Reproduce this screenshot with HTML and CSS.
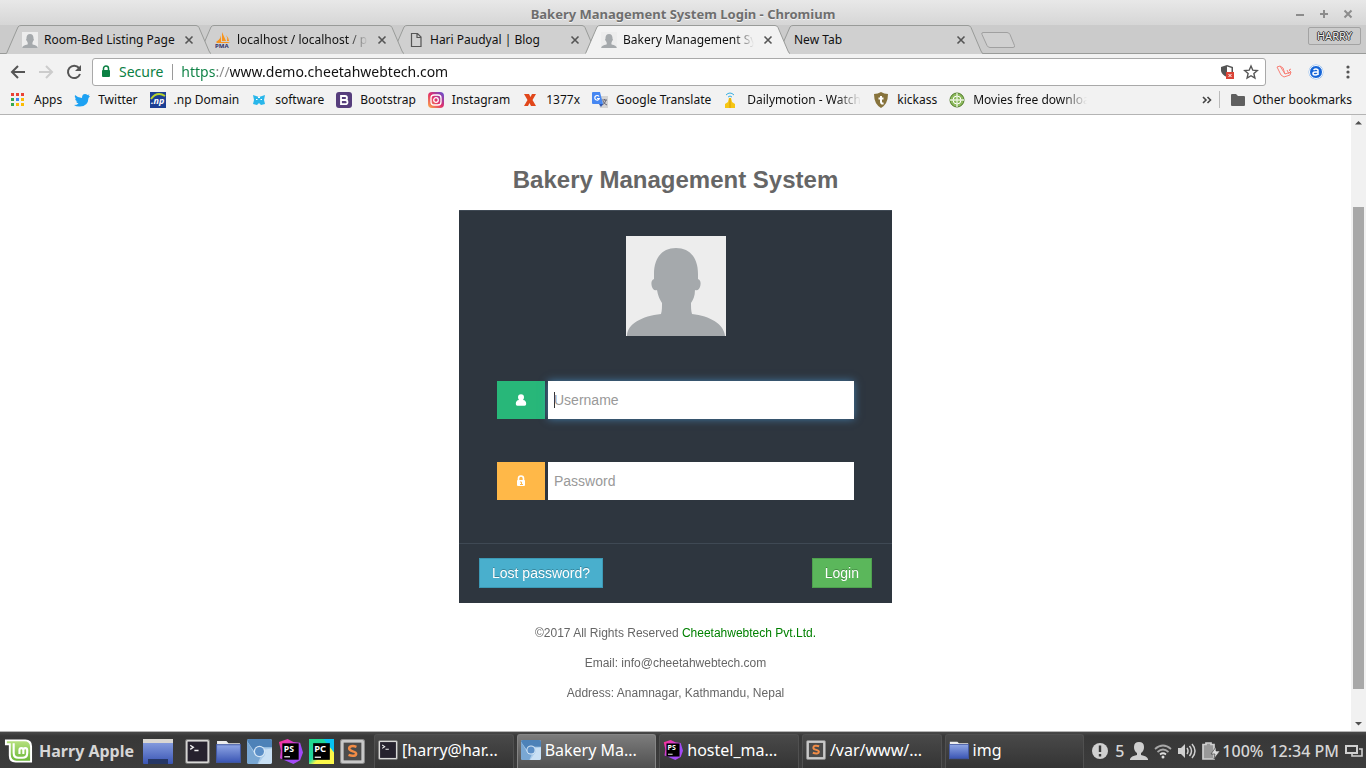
FILE: index.html
```html
<!DOCTYPE html>
<html lang="en">
<head>
    <meta charset="UTF-8">
    <meta name="viewport" content="width=device-width, initial-scale=1.0">
    <title>Bakery Management System Login</title>
    <link rel="stylesheet" href="styles.css">
</head>
<body>
    <!-- Shared icons -->
    <svg class="defs" aria-hidden="true">
        <defs>
            <linearGradient id="blueGrad" x1="0" y1="0" x2="0" y2="1">
                <stop offset="0" stop-color="#8fa6e4"/><stop offset="1" stop-color="#3a55b4"/>
            </linearGradient>
            <linearGradient id="instaGrad" x1="0" y1="1" x2="1" y2="0">
                <stop offset="0" stop-color="#fdb04b"/><stop offset=".5" stop-color="#e1306c"/><stop offset="1" stop-color="#5b51d8"/>
            </linearGradient>
            <linearGradient id="mintGrad" x1="0" y1="0" x2="0" y2="1">
                <stop offset="0" stop-color="#b5e07d"/><stop offset="1" stop-color="#6cb83a"/>
            </linearGradient>
            <linearGradient id="psGrad" x1="0" y1="0" x2="1" y2="1">
                <stop offset="0" stop-color="#fc3191"/><stop offset=".35" stop-color="#d93cc8"/><stop offset=".6" stop-color="#9a4dfa"/><stop offset="1" stop-color="#b345f1"/>
            </linearGradient>
            <linearGradient id="pcGrad" x1="0" y1="0" x2="1" y2="1">
                <stop offset="0" stop-color="#21d789"/><stop offset=".45" stop-color="#21d7a0"/><stop offset=".6" stop-color="#fcf84a"/><stop offset="1" stop-color="#fcf84a"/>
            </linearGradient>
        </defs>
        <symbol id="avatar" viewBox="0 0 100 100">
            <rect width="100" height="100" fill="#ededed"/>
            <path fill="#a5a9ac" d="M50 12C36 12 28 22 28 38v5c-3 1-3 5-2 8 1 2 2 4 5 3 1 6 3 10 5 13 0 4 0 8-1 11C16 80 1 88 1 100h98C98 88 84 80 66 78c-1-3-1-7-1-11 2-3 4-7 4-13 3 1 4-1 5-3 1-3 1-7-2-8v-5C72 22 64 12 50 12z"/>
        </symbol>
        <symbol id="close" viewBox="0 0 10 10"><path d="M1.5 1.5l7 7M8.500 1.500l-7 7" stroke="#555" stroke-width="1.600" fill="none"/></symbol>
        <symbol id="tabshape" viewBox="0 0 205 29" preserveAspectRatio="none">
            <path d="M0 29C3 28 10 3 13 1Q13.500.5 15 .5H190Q192 .5 193 2.500L203 26Q204 28.500 205 29z" stroke="none"/>
            <path d="M.5 28.500L12 2Q13 .5 15 .5H190Q192 .5 193 2.500L203 26Q204 28.500 205 28.500" fill="none" stroke="#999b99"/>
        </symbol>
        <symbol id="terminal" viewBox="0 0 24 24">
            <rect x=".5" y=".5" width="23" height="23" rx="2" fill="#d8d8d6" stroke="#777"/>
            <rect x="2.500" y="2.500" width="19" height="19" fill="#26222e"/>
            <path d="M5 6l3 2-3 2M9 11h4" fill="none" stroke="#eee" stroke-width="1.300"/>
        </symbol>
        <symbol id="folder" viewBox="0 0 24 24">
            <path d="M1 4V2h9l2 2h11v8H1z" fill="#ececec"/>
            <rect x=".5" y="5.500" width="23" height="17" fill="url(#blueGrad)" stroke="#4158a3"/>
        </symbol>
        <symbol id="chromium" viewBox="0 0 24 24">
            <rect width="24" height="24" rx="2" fill="#a9cbea"/>
            <path d="M0 2q0-2 2-2h20q2 0 2 2v6H12a5 5 0 0 0-5 4z" fill="#4d82b8"/>
            <path d="M0 2l7 12q3 4 6 3l-3 7H2q-2 0-2-2z" fill="#79a7d3"/>
            <path d="M17 10q2 5-2 8l-4 6h11q2 0 2-2V9z" fill="#c9e0f4"/>
            <circle cx="12" cy="12" r="5.500" fill="#d5e6f5"/><circle cx="12" cy="12" r="4.300" fill="#5b8fc7"/>
        </symbol>
        <symbol id="phpstorm" viewBox="0 0 26 26">
            <path d="M1 3l9-3 6 3 7 1 3 10-3 8-7 4-9-4-5-2 1-8z" fill="url(#psGrad)"/>
            <rect x="4.500" y="4.500" width="17" height="17" fill="#000"/>
            <text x="6" y="13" class="glyph">PS</text><path d="M6.500 18.500h6" stroke="#fff" stroke-width="1.200"/>
        </symbol>
        <symbol id="sublime" viewBox="0 0 24 24">
            <rect x=".5" y=".5" width="23" height="23" rx="2" fill="#c9c9c9" stroke="#888"/>
            <rect x="3.500" y="3.500" width="17" height="17" fill="#4b4b4b"/>
            <path d="M15.800 7.500c-4-1.500-7-.5-7 1.700 0 3.300 6.700 2 6.700 4.900 0 2.200-3.500 2.700-7.300 1.200" fill="none" stroke="#f28c46" stroke-width="2.400"/>
        </symbol>
    </svg>

    <!-- Window title -->
    <header class="titlebar">
        <span class="window-title">Bakery Management System Login - Chromium</span>
        <div class="window-controls">
            <button type="button" aria-label="Minimize"><svg viewBox="0 0 10 10"><path d="M1 6h8"/></svg></button>
            <button type="button" aria-label="Maximize"><svg viewBox="0 0 10 10"><path d="M1 5h8M5 1v8"/></svg></button>
            <button type="button" aria-label="Close window"><svg viewBox="0 0 10 10"><path d="M1.500 1.500l7 7M8.500 1.500l-7 7"/></svg></button>
        </div>
    </header>

    <!-- Tabs -->
    <nav class="tabs">
        <div class="tab">
            <svg class="tab-shape"><use href="#tabshape"/></svg>
            <svg class="icon"><use href="#avatar"/></svg>
            <span class="tab-label">Room-Bed Listing Page</span>
            <button type="button" aria-label="Close tab"><svg><use href="#close"/></svg></button>
        </div>
        <div class="tab">
            <svg class="tab-shape"><use href="#tabshape"/></svg>
            <svg class="icon" viewBox="0 0 16 16"><path d="M6 1q1 5-5 9h5zM7 0l4 9H7zM11 3q2 3 1 6h2q0-3-3-6zM1 10h14l-2 1H2z" fill="#f7941d"/><text x="0" y="16" class="pma">PMA</text></svg>
            <span class="tab-label fade">localhost / localhost / phpmyadmin</span>
            <button type="button" aria-label="Close tab"><svg><use href="#close"/></svg></button>
        </div>
        <div class="tab">
            <svg class="tab-shape"><use href="#tabshape"/></svg>
            <svg class="icon" viewBox="0 0 16 16"><path d="M3.500 1.500h6l3.500 3.500v9.500H3.500zM9 1.500V5.500h4" fill="none" stroke="#555" stroke-width="1.200"/></svg>
            <span class="tab-label">Hari Paudyal | Blog</span>
            <button type="button" aria-label="Close tab"><svg><use href="#close"/></svg></button>
        </div>
        <div class="tab active">
            <svg class="tab-shape"><use href="#tabshape"/></svg>
            <svg class="icon"><use href="#avatar"/></svg>
            <span class="tab-label fade">Bakery Management System Login</span>
            <button type="button" aria-label="Close tab"><svg><use href="#close"/></svg></button>
        </div>
        <div class="tab">
            <svg class="tab-shape"><use href="#tabshape"/></svg>
            <span class="tab-label">New Tab</span>
            <button type="button" aria-label="Close tab"><svg><use href="#close"/></svg></button>
        </div>
        <button type="button" class="new-tab" aria-label="New tab"><svg viewBox="0 0 36 18"><path d="M3 1.500h24q2 0 3 2l4.500 11q.5 2-1.500 2H10q-2 0-3-2l-5-11q-.8-2 1-2z"/></svg></button>
        <button type="button" class="profile">HARRY</button>
    </nav>

    <!-- Address bar -->
    <div class="toolbar">
        <div class="history">
            <button type="button" aria-label="Back"><svg viewBox="0 0 16 16"><path d="M15 8H2M8 2L2 8l6 6" fill="none" stroke="#555" stroke-width="2"/></svg></button>
            <button type="button" aria-label="Forward"><svg viewBox="0 0 16 16"><path d="M1 8h13M8 2l6 6-6 6" fill="none" stroke="#ccc" stroke-width="2"/></svg></button>
            <button type="button" aria-label="Reload"><svg viewBox="0 0 16 16"><path d="M13 4A6.200 6.200 0 1 0 14 10" fill="none" stroke="#555" stroke-width="2"/><path d="M15 1v6H9z" fill="#555"/></svg></button>
        </div>
        <div class="omnibox">
            <button type="button" class="secure">
                <svg viewBox="0 0 10 13"><path d="M2.500 6V3.500a2.500 2.500 0 0 1 5 0V6" fill="none" stroke="#0b8043" stroke-width="1.500"/><rect x="1" y="5" width="8" height="7" rx="1" fill="#0b8043"/></svg>
                Secure
            </button>
            <input type="text" class="url" aria-label="Address" value="https://www.demo.cheetahwebtech.com">
            <button type="button" aria-label="Site blocked"><svg viewBox="0 0 16 16"><path d="M8 1l6 2v5H12.500V4L8 2.500V13q-5-2-6-6V3z" fill="#555"/><rect x="7" y="8" width="8" height="7" fill="#db4437"/><path d="M9.500 10l3 3M12.500 10l-3 3" stroke="#fff"/></svg></button>
            <button type="button" aria-label="Bookmark this page"><svg viewBox="0 0 16 16"><path d="M8 2l1.800 4.200 4.500.4-3.400 3 1 4.500L8 11.700 4.100 14.100l1-4.500-3.400-3 4.500-.4z" fill="none" stroke="#555" stroke-width="1.400"/></svg></button>
        </div>
        <div class="extensions">
            <button type="button" aria-label="Laravel"><svg viewBox="0 0 16 16"><path d="M1 3l3-1 5 8 6-2-2-2 2-1M1 3l4 8 3 2 6-2 1-3M4 2l3 2M9 10l-2-6M11 6l2 4" fill="none" stroke="#f88077"/></svg></button>
            <button type="button" aria-label="Extension"><svg viewBox="0 0 16 16"><circle cx="8" cy="8" r="7.500" fill="#8fbcf0"/><circle cx="8" cy="8" r="6.500" fill="#1565d8" stroke="#fff"/><path d="M5.500 6q2.500-2 4.500 0v5M10 8H7q-2 0-2 1.500T7 11q2 0 3-1" fill="none" stroke="#fff" stroke-width="1.500"/></svg></button>
            <button type="button" aria-label="Menu"><svg viewBox="0 0 16 16"><g fill="#555"><circle cx="8" cy="3" r="1.600"/><circle cx="8" cy="8" r="1.600"/><circle cx="8" cy="13" r="1.600"/></g></svg></button>
        </div>
    </div>

    <!-- Bookmarks -->
    <nav class="bookmarks">
        <a href="#"><svg class="icon" viewBox="0 0 16 16"><path d="M1 1h3v3H1zM6 1h3v3H6zM11 1h3v3h-3z" fill="#ea4335"/><path d="M1 6h3v3H1zM1 11h3v3H1z" fill="#34a853"/><path d="M6 6h3v3H6z" fill="#4285f4"/><path d="M11 6h3v3h-3zM6 11h3v3H6zM11 11h3v3h-3z" fill="#fbbc05"/></svg><span>Apps</span></a>
        <a href="#"><svg class="icon" viewBox="0 0 16 16"><path d="M1 3q3 3 7 3 0-4 3-4 1.500 0 2.500 1L15.500 2.500 14.500 4l1.500.3L14.500 6Q14 15 5 14.500 2 14.500 0 13q3 0 4.500-1.500Q2.500 11 2 9.500h1.500Q1 8.500 1 6.500l1.200.3Q0 5 1 3z" fill="#1da1f2"/></svg><span>Twitter</span></a>
        <a href="#"><svg class="icon" viewBox="0 0 16 16"><rect width="16" height="16" fill="#1c3f94"/><path d="M1 7Q7-1 15 4" fill="none" stroke="#b9d32c" stroke-width="2"/><text x="1" y="12" class="np">.np</text></svg><span>.np Domain</span></a>
        <a href="#"><svg class="icon" viewBox="0 0 16 16"><path d="M2 3l3 1 3 1 3-1 3-1-1 5 1 4-4 1-2-2-2 2-4-1 1-4z" fill="#29b6ea"/><path d="M5 7.500h1.500M9.500 7.500H11M7 5.500h2" stroke="#fff"/></svg><span>software</span></a>
        <a href="#"><svg class="icon" viewBox="0 0 16 16"><rect width="16" height="16" rx="3" fill="#563d7c"/><path d="M5 4h4q2 0 2 2t-2 2q2.500 0 2.500 2.200T9 12.200H5zM5 8h4" fill="none" stroke="#fff" stroke-width="1.800"/></svg><span>Bootstrap</span></a>
        <a href="#"><svg class="icon" viewBox="0 0 16 16"><rect width="16" height="16" rx="4" fill="url(#instaGrad)"/><rect x="3" y="3" width="10" height="10" rx="3" fill="none" stroke="#fff" stroke-width="1.300"/><circle cx="8" cy="8" r="2.300" fill="none" stroke="#fff" stroke-width="1.300"/></svg><span>Instagram</span></a>
        <a href="#"><svg class="icon" viewBox="0 0 16 16"><path d="M2 2h5l1.500 3L10 2h4l-3.500 6L14 14H9L7.500 11 6 14H2l3.500-6z" fill="#e1471b"/></svg><span>1377x</span></a>
        <a href="#"><svg class="icon" viewBox="0 0 16 16"><path d="M6 4h10v12H8z" fill="#d3d3d3"/><path d="M10 8h5M12.500 7v1M14 8q-1 4-4 5M11 9q1 3 4 4" fill="none" stroke="#667" /><path d="M1 0h7l3 12H1q-1 0-1-1V1q0-1 1-1z" fill="#4687f2"/><path d="M7 12h4l-2 3z" fill="#3059b5"/><path d="M7 4.500A2.300 2.300 0 1 0 7.300 6.500H5" fill="none" stroke="#fff" stroke-width="1.200"/></svg><span>Google Translate</span></a>
        <a href="#"><svg class="icon" viewBox="0 0 16 16"><path d="M3 3q4-4 8 0M5 5q2-2 4 0" fill="none" stroke="#35aee0"/><path d="M6 6h2l1 4 3 2v4H2v-4l3-2z" fill="#f6c614"/><path d="M7 6v10" stroke="#d99c09"/></svg><span class="fade">Dailymotion - Watch, publish</span></a>
        <a href="#"><svg class="icon" viewBox="0 0 16 16"><path d="M1 2q4 0 7-2 3 2 7 2 0 10-7 14Q1 12 1 2z" fill="#87733c"/><path d="M8 4v6q0 2 2.500 1.300M5.500 6.500h5" fill="none" stroke="#fff" stroke-width="2"/></svg><span>kickass</span></a>
        <a href="#"><svg class="icon" viewBox="0 0 16 16"><circle cx="8" cy="8" r="7" fill="#8db95d" stroke="#4f7c28"/><circle cx="8" cy="8" r="4" fill="none" stroke="#fff"/><path d="M8 1v14M1 8h14" stroke="#e8f2dc" stroke-width="1.300"/></svg><span class="fade">Movies free download</span></a>
        <button type="button" class="more" aria-label="More bookmarks"><svg viewBox="0 0 10 10"><path d="M1 2l3 3-3 3M5.500 2l3 3-3 3" fill="none" stroke="#444" stroke-width="1.600"/></svg></button>
        <a href="#" class="other"><svg class="icon" viewBox="0 0 16 16"><path d="M1 3q0-1 1-1h4l2 2h6q1 0 1 1v8q0 1-1 1H2q-1 0-1-1z" fill="#5f5f5f"/></svg><span>Other bookmarks</span></a>
    </nav>

    <!-- Page -->
    <div class="viewport">
        <main class="page">
            <h1>Bakery Management System</h1>
            <form class="login-box">
                <div class="avatar"><svg><use href="#avatar"/></svg></div>
                <div class="field">
                    <label for="username" class="addon green" aria-label="Username"><svg viewBox="0 0 12 12"><path d="M6 .3a3 3 0 0 1 3 3q0 1.700-1 2.700 3.200.3 3.200 4 0 1.700-1.600 1.700H2.400Q.8 11.700.8 10q0-3.700 3.200-4-1-1-1-2.700a3 3 0 0 1 3-3z" fill="#fff"/></svg></label>
                    <input type="text" id="username" class="focused" placeholder="Username" autofocus>
                </div>
                <div class="field">
                    <label for="password" class="addon orange" aria-label="Password"><svg viewBox="0 0 12 12"><path d="M3.500 6V3.500a2.500 2.500 0 0 1 5 0V6" fill="none" stroke="#fff" stroke-width="1.600"/><rect x="2" y="5" width="8" height="6" rx="1" fill="#fff"/><path d="M5 7h1.500v3M5 9.500h3" fill="none" stroke="#ffb848"/></svg></label>
                    <input type="password" id="password" placeholder="Password">
                </div>
                <div class="form-actions">
                    <button type="button" class="btn btn-info">Lost password?</button>
                    <button type="submit" class="btn btn-success">Login</button>
                </div>
            </form>
            <footer>
                <p>©2017 All Rights Reserved <a href="#">Cheetahwebtech Pvt.Ltd.</a></p>
                <p>Email: info@cheetahwebtech.com</p>
                <p>Address: Anamnagar, Kathmandu, Nepal</p>
            </footer>
        </main>
        <div class="scrollbar">
            <svg viewBox="0 0 15 15"><path d="M4 9.500L7.500 6 11 9.500z" fill="#505050"/></svg>
            <div class="track"><div class="thumb"></div></div>
            <svg viewBox="0 0 15 15"><path d="M4 6l3.500 3.500L11 6z" fill="#505050"/></svg>
        </div>
    </div>

    <!-- Desktop panel -->
    <div class="panel">
        <button type="button" class="start">
            <svg viewBox="0 0 30 26"><path d="M1 1h21q7 0 7 7v17H12q-7 0-7-7V7H1z" fill="#fff"/><path d="M3 3h18q6 0 6 6v14H13q-6 0-6-6V5H3z" fill="url(#mintGrad)"/><path d="M10 5v10q0 5 5 5h4q5 0 5-5v-3q0-2-2-2t-2 2v4M20 12q0-2-2-2t-2 2v4" fill="none" stroke="#fff" stroke-width="2.200"/></svg>
            Harry Apple
        </button>
        <div class="launchers">
            <button type="button" class="wide" aria-label="Show desktop"><svg viewBox="0 0 30 25"><rect width="30" height="25" rx="1" fill="url(#blueGrad)"/><rect width="30" height="4" fill="#d9d7d3"/><path d="M5 20h20v5H5z" fill="#263766"/></svg></button>
            <button type="button" aria-label="Terminal"><svg><use href="#terminal"/></svg></button>
            <button type="button" aria-label="Files"><svg><use href="#folder"/></svg></button>
            <button type="button" aria-label="Chromium"><svg><use href="#chromium"/></svg></button>
            <button type="button" aria-label="PhpStorm"><svg><use href="#phpstorm"/></svg></button>
            <button type="button" aria-label="PyCharm"><svg viewBox="0 0 24 24"><rect width="24" height="24" fill="url(#pcGrad)"/><path d="M14 0h10v13z" fill="#07c3f2"/><rect x="4" y="4" width="16" height="16" fill="#000"/><text x="5" y="12" class="glyph">PC</text><path d="M5.500 17.500h6" stroke="#fff" stroke-width="1.200"/></svg></button>
            <button type="button" aria-label="Sublime Text"><svg><use href="#sublime"/></svg></button>
        </div>
        <div class="tasks">
            <button type="button"><svg><use href="#terminal"/></svg>[harry@har...</button>
            <button type="button" class="current"><svg><use href="#chromium"/></svg>Bakery Ma...</button>
            <button type="button"><svg><use href="#phpstorm"/></svg>hostel_ma...</button>
            <button type="button"><svg><use href="#sublime"/></svg>/var/www/...</button>
            <button type="button"><svg><use href="#folder"/></svg>img</button>
        </div>
        <div class="tray">
            <svg viewBox="0 0 18 18"><circle cx="9" cy="9" r="8" fill="#d0d0d0"/><path d="M9 3.500v6.500M9 12v2.500" stroke="#3a3a3a" stroke-width="2.400"/></svg>
            <span class="count">5</span>
            <svg viewBox="0 0 18 18"><path d="M9 0q5 0 5 5 0 4-3 6v2q6 1 7 4v1H0v-1q1-3 7-4v-2Q4 9 4 5q0-5 5-5z" fill="#d0d0d0"/></svg>
            <svg viewBox="0 0 18 18"><path d="M1 7q8-7 16 0M3.500 10q5.500-5 11 0" fill="none" stroke="#a8a8a8" stroke-width="1.700"/><path d="M6 12.500q3-2.500 6 0" fill="none" stroke="#ddd" stroke-width="1.700"/><circle cx="9" cy="15" r="1.500" fill="#ddd"/></svg>
            <svg viewBox="0 0 18 18"><path d="M0 6h3l4-4v14l-4-4H0z" fill="#d0d0d0"/><path d="M9 6q2 3 0 6M11.500 4q4 5 0 10M14 2q6 7 0 14" fill="none" stroke="#d0d0d0" stroke-width="1.500"/></svg>
            <div class="battery">
                <svg viewBox="0 0 18 18"><path d="M1 2.500h3V1h5v1.500h3V17H1z" fill="#999" stroke="#d0d0d0" stroke-width="1.700"/><path d="M14 5l-5 7h4l-1 5 6-8h-4z" fill="#ddd" stroke="#333" stroke-width=".6"/></svg>
                <span>100%</span>
            </div>
            <span class="clock">12:34 PM</span>
            <svg viewBox="0 0 18 18"><path d="M1 4h11v7H1z" fill="none" stroke="#d0d0d0" stroke-width="2"/><path d="M14 7h3v7H7v-2" fill="none" stroke="#d0d0d0" stroke-width="1.600"/></svg>
        </div>
    </div>
</body>
</html>
```
FILE: styles.css
```css
* {
    box-sizing: border-box;
}
body {
    margin: 0;
    height: 100vh;
    display: flex;
    flex-direction: column;
    overflow: hidden;
    font-family: "Noto Sans", sans-serif;
    font-size: 12px;
    color: #222;
    background: #fff;
}
button {
    font: inherit;
    color: inherit;
    background: none;
    border: none;
    padding: 0;
}
svg {
    display: block;
    flex: none;
}
a {
    color: inherit;
    text-decoration: none;
}
.defs {
    position: absolute;
    width: 0;
    height: 0;
}
.icon {
    width: 16px;
    height: 16px;
}

/* Window title */
.titlebar {
    height: 25px;
    flex: none;
    display: grid;
    grid-template-columns: 1fr auto 1fr;
    align-items: center;
    padding: 3px 13px 0;
    background: linear-gradient(#e8e8e8, #d6d6d6);
}
.window-title {
    grid-column: 2;
    font-size: 13px;
    font-weight: bold;
    color: #6e6e6e;
    text-shadow: 0 1px #f4f4f4;
}
.window-controls {
    display: flex;
    justify-content: flex-end;
    gap: 14px;
}
.window-controls svg {
    width: 10px;
    height: 10px;
    fill: none;
    stroke: #8c8c8c;
    stroke-width: 2;
}

/* Tabs */
.tabs {
    height: 29px;
    flex: none;
    display: flex;
    padding: 0 5px 0 6px;
    background: #cbcbcb;
    box-shadow: inset 0 -1px #999b99;
}
.tab {
    position: relative;
    display: flex;
    align-items: center;
    gap: 6px;
    width: 205px;
    margin-right: -12px;
    padding: 0 17px 0 16px;
}
.tab:nth-child(1) { z-index: 3; }
.tab:nth-child(2) { z-index: 2; }
.tab:nth-child(3) { z-index: 1; }
.tab-shape {
    position: absolute;
    inset: 0;
    z-index: -1;
    width: 100%;
    height: 100%;
    fill: #d0d0d0;
}
.tab.active {
    z-index: 4;
}
.tab.active .tab-shape {
    fill: #f2f2f2;
}
.tab:not(.active) {
    isolation: isolate;
}
.tab-label {
    flex: 1;
    overflow: hidden;
    white-space: nowrap;
    color: #111;
}
.tab-label.fade {
    mask-image: linear-gradient(to left, transparent, #000 20px);
}
.tab button svg {
    width: 10px;
    height: 10px;
}
.tab button {
    margin-left: 3px;
}
.new-tab {
    margin-left: 9px;
    align-self: center;
}
.new-tab svg {
    width: 36px;
    height: 18px;
    fill: #d0d0d0;
    stroke: #a0a0a0;
}
.profile {
    margin: 2px 0 9px auto;
    width: 53px;
    border: 1px solid #a3a3a3;
    border-radius: 2px;
    font-size: 11px;
    line-height: 14px;
    color: #eee;
    text-shadow: 1px 0 #333, -1px 0 #333, 0 1px #333, 0 -1px #333;
}

/* Address bar */
.toolbar {
    flex: none;
    display: flex;
    align-items: center;
    gap: 10px;
    padding: 4px 10px 0;
    background: #f2f2f2;
}
.toolbar svg {
    width: 16px;
    height: 16px;
}
.history {
    display: flex;
    gap: 12px;
}
.extensions {
    display: flex;
    gap: 16px;
}
.omnibox {
    flex: 1;
    display: flex;
    align-items: center;
    gap: 8px;
    height: 28px;
    padding: 0 6px 1px 8px;
    background: #fff;
    border: 1px solid #a9a9a9;
    border-radius: 3px;
    font-size: 14px;
}
.toolbar .secure {
    display: flex;
    align-items: center;
    gap: 8px;
    padding-right: 9px;
    border-right: 1px solid #9a9a9a;
    color: #0b8043;
    line-height: 16px;
}
.toolbar .secure svg {
    width: 10px;
    height: 13px;
}
.url {
    flex: 1;
    min-width: 0;
    padding: 0;
    border: none;
    outline: none;
    font: inherit;
    color: transparent;
    /* scheme in green, separator in grey, host in black */
    background: linear-gradient(to right, #0b8043 34px, #888 34px, #888 49px, #111 49px);
    background-clip: text;
}

/* Bookmarks */
.bookmarks {
    flex: none;
    display: flex;
    align-items: center;
    gap: 12px;
    height: 29px;
    padding: 0 14px 1px 10px;
    background: #f2f2f2;
    border-bottom: 1px solid #b4b4b4;
    color: #111;
}
.bookmarks a {
    display: flex;
    align-items: center;
    gap: 8px;
    white-space: nowrap;
}
.bookmarks .fade {
    width: 114px;
    overflow: hidden;
    mask-image: linear-gradient(to left, transparent, #000 24px);
}
.more {
    margin-left: auto;
    padding-right: 7px;
}
.more svg {
    width: 10px;
    height: 10px;
}
.bookmarks .other {
    gap: 7px;
    margin-left: -12px;
    padding-left: 10px;
    border-left: 1px solid #bbb;
}

/* Page */
.viewport {
    flex: 1;
    min-height: 0;
    display: flex;
    background: #fff;
}
.page {
    flex: 1;
    display: flex;
    flex-direction: column;
    align-items: center;
    padding-top: 50px;
    font-family: "Liberation Sans", Arial, sans-serif;
    color: #666;
}
h1 {
    margin: 0 0 15px;
    font-size: 24px;
    line-height: 30px;
}
.login-box {
    width: 433px;
    max-width: 100%;
    padding-top: 25px;
    background: #2e363f;
    border-top: 1px solid #3f4954;
}
.avatar {
    display: flex;
    justify-content: center;
    margin-bottom: 45px;
}
.avatar svg {
    width: 100px;
    height: 100px;
}
.field {
    display: flex;
    gap: 3px;
    margin: 0 38px 43px;
}
.addon {
    display: flex;
    align-items: center;
    justify-content: center;
    width: 48px;
    height: 38px;
}
.addon svg {
    width: 12px;
    height: 12px;
}
.green {
    background: #28b779;
}
.orange {
    background: #ffb848;
}
.field input {
    flex: 1;
    min-width: 0;
    padding: 0 6px;
    border: none;
    outline: none;
    background: #fff;
    font-family: inherit;
    font-size: 14px;
    color: #555;
}
.field input::placeholder {
    color: #999;
}
.field .focused {
    box-shadow: 0 0 8px rgba(82, 168, 236, 0.6);
}
/* steady caret while the field is empty */
.field .focused:placeholder-shown {
    caret-color: transparent;
    background: linear-gradient(#333, #333) 6px center / 1px 16px no-repeat #fff;
}
.form-actions {
    display: flex;
    justify-content: space-between;
    padding: 14px 20px 15px;
    border-top: 1px solid #3f4954;
}
.btn {
    height: 30px;
    padding: 0 12px;
    font-size: 14px;
    color: #fff;
    text-shadow: 0 -1px rgba(0, 0, 0, 0.25);
}
.btn-info {
    background: #49afcd;
    border: 1px solid #3c99b5;
}
.btn-success {
    background: #5bb75b;
    border: 1px solid #4ea04e;
}
footer {
    padding-top: 20px;
    font-size: 12px;
    line-height: 20px;
    text-align: center;
}
footer p {
    margin: 0 0 10px;
}
footer a {
    color: #008000;
}
.scrollbar {
    width: 15px;
    display: flex;
    flex-direction: column;
    background: #f1f1f1;
}
.scrollbar svg {
    width: 15px;
    height: 15px;
}
.track {
    flex: 1;
    display: flex;
    flex-direction: column;
    padding: 0 2px;
}
.track::before {
    content: "";
    flex: 77;
}
.track::after {
    content: "";
    flex: 27;
}
.thumb {
    flex: 483;
    background: #a8a8a8;
}

/* Desktop panel */
.panel {
    flex: none;
    display: flex;
    align-items: center;
    height: 37px;
    padding: 2px 3px 0 4px;
    border-top: 1px solid #b5b5b5;
    background: linear-gradient(#4a4a4a, #383838 4px, #3c3c3c);
    font-size: 16px;
    color: #e6e6e6;
    white-space: nowrap;
}
.start {
    display: flex;
    align-items: center;
    gap: 6px;
    font-weight: bold;
    color: #d6d6d6;
}
.start svg {
    width: 29px;
    height: 26px;
}
.launchers {
    display: flex;
    align-items: center;
    gap: 6px;
    margin-left: 9px;
}
.launchers svg {
    width: 25px;
    height: 25px;
}
.launchers .wide {
    margin-right: 6px;
}
.launchers .wide svg {
    width: 30px;
}
.tasks {
    flex: 1;
    display: flex;
    gap: 3px;
    margin: 0 7px 0 9px;
    align-self: stretch;
}
.tasks button {
    flex: 1;
    display: flex;
    align-items: center;
    gap: 4px;
    padding: 0 3px 3px;
    border: 1px solid #505050;
    border-bottom: none;
    border-radius: 3px 3px 0 0;
    background: linear-gradient(#494949, #343434);
    color: #fff;
}
.tasks .current {
    background: linear-gradient(#7c7c7c, #505050);
    border-color: #858585;
}
.tasks svg {
    width: 20px;
    height: 20px;
}
.tray {
    display: flex;
    align-items: center;
    gap: 6px;
    font-weight: 500;
    color: #d6d6d6;
}
.tray svg {
    width: 18px;
    height: 18px;
}
.battery {
    display: flex;
    align-items: center;
    gap: 2px;
}
.glyph {
    font-size: 9px;
    font-weight: bold;
    fill: #fff;
}
.pma {
    font-size: 6px;
    font-weight: bold;
    fill: #33336b;
}
.np {
    font-size: 9px;
    font-weight: bold;
    font-style: italic;
    fill: #fff;
}
```
